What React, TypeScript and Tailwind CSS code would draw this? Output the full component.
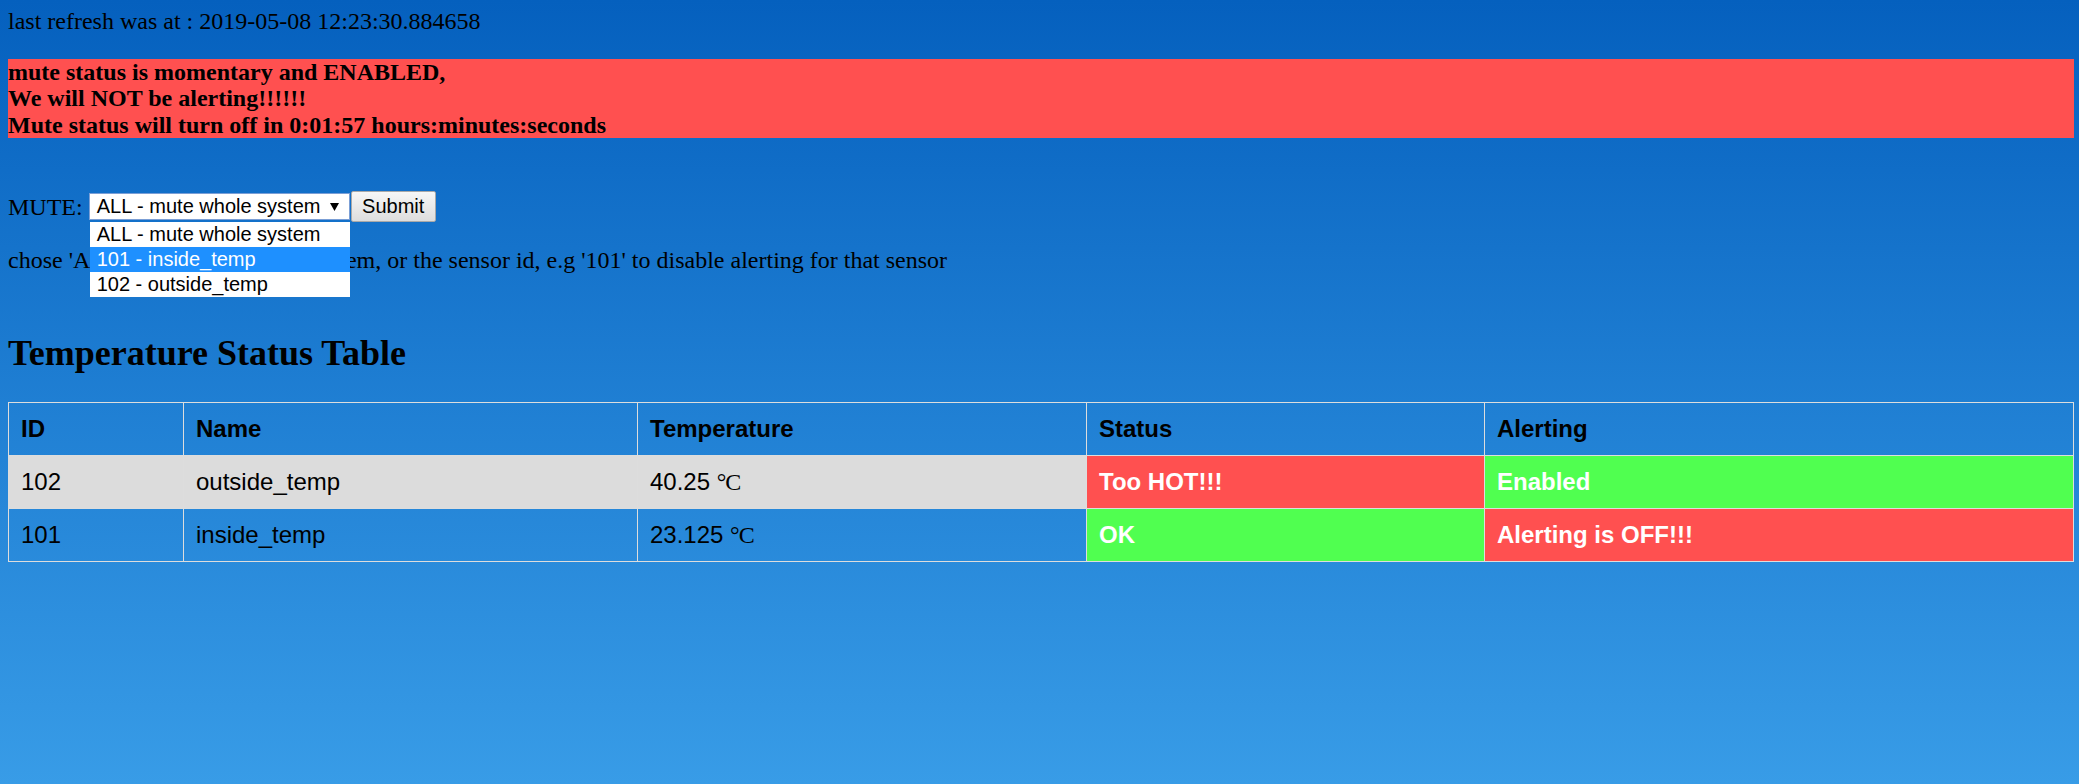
import React from 'react';

type Sensor = {
    id: string;
    name: string;
    temp: string;
    status: string;
    statusOk: boolean;
    alerting: string;
    alertingOn: boolean;
    shaded: boolean;
};

const sensors: Sensor[] = [
    { id: '102', name: 'outside_temp', temp: '40.25', status: 'Too HOT!!!', statusOk: false, alerting: 'Enabled', alertingOn: true, shaded: true },
    { id: '101', name: 'inside_temp', temp: '23.125', status: 'OK', statusOk: true, alerting: 'Alerting is OFF!!!', alertingOn: false, shaded: false },
];

const options = ['ALL - mute whole system', '101 - inside_temp', '102 - outside_temp'];

const cell = 'border border-[#dddddd] px-3 py-3 leading-[28px] text-left align-middle';

const MuteSelect = () => (
    <div className="relative ml-[6px] h-[27px]">
        <div className="flex h-[27px] w-[261px] items-center justify-between border border-[#7b9fd6] bg-white pl-[7px] pr-[10px] font-['Liberation_Sans',Arial,sans-serif] text-[20px] leading-[23px] text-black">
            <span>ALL - mute whole system</span>
            <svg width="9" height="8" viewBox="0 0 9 8" className="mt-[1px]">
                <polygon points="0,0 9,0 4.5,8" fill="#000" />
            </svg>
        </div>
        {/* open option list */}
        <div className="absolute left-[1px] top-[29px] z-10 w-[260px] bg-white font-['Liberation_Sans',Arial,sans-serif] text-[20px] leading-[25px] text-black">
            {options.map((opt, i) => (
                <div
                    key={opt}
                    className={i === 1 ? 'h-[25px] bg-[#1e90ff] pl-[7px] text-white' : 'h-[25px] pl-[7px]'}
                >
                    {opt}
                </div>
            ))}
        </div>
    </div>
);

export default function App() {
    return (
        <div className="min-h-screen bg-[linear-gradient(to_bottom,#0560be,#389ce7)] pl-2 pr-[5px] pt-2 font-['Liberation_Serif','Times_New_Roman',serif] text-[24px] leading-[26.6px] text-black">
            <div>last refresh was at : 2019-05-08 12:23:30.884658</div>

            <div className="mt-[24px] bg-[#ff5050] font-bold">
                <div>mute status is momentary and ENABLED,</div>
                <div>We will NOT be alerting!!!!!!</div>
                <div>Mute status will turn off in 0:01:57 hours:minutes:seconds</div>
            </div>

            <div className="mt-[53px] flex h-[31px] items-center">
                <span>MUTE:</span>
                <MuteSelect />
                <button className="ml-[1px] h-[31px] w-[85px] rounded-[2px] border border-[#a9a9a9] bg-[linear-gradient(to_bottom,#f7f7f7,#dddddd)] font-['Liberation_Sans',Arial,sans-serif] text-[20px] leading-[23px] text-black">
                    Submit
                </button>
            </div>

            <div className="mt-[25px]">
                chose 'ALL' to mute the whole system, or the sensor id, e.g '101' to disable alerting for that sensor
            </div>

            <h2 className="mt-[59px] text-[36px] font-bold leading-[40px]">Temperature Status Table</h2>

            <table className="mt-[29px] w-full table-fixed border-collapse font-['Liberation_Sans',Arial,sans-serif] text-[24px]">
                <colgroup>
                    <col className="w-[175px]" />
                    <col className="w-[454px]" />
                    <col className="w-[449px]" />
                    <col className="w-[398px]" />
                    <col />
                </colgroup>
                <thead>
                    <tr className="font-bold">
                        <th className={cell}>ID</th>
                        <th className={cell}>Name</th>
                        <th className={cell}>Temperature</th>
                        <th className={cell}>Status</th>
                        <th className={cell}>Alerting</th>
                    </tr>
                </thead>
                <tbody>
                    {sensors.map((s) => (
                        <tr key={s.id} className={s.shaded ? 'bg-[#dcdcdc]' : ''}>
                            <td className={cell}>{s.id}</td>
                            <td className={cell}>{s.name}</td>
                            <td className={cell}>
                                {s.temp} <span className="font-['Liberation_Serif',serif] tracking-[-1px]">°C</span>
                            </td>
                            <td className={`${cell} font-bold text-white ${s.statusOk ? 'bg-[#50ff50]' : 'bg-[#ff5050]'}`}>
                                {s.status}
                            </td>
                            <td className={`${cell} font-bold text-white ${s.alertingOn ? 'bg-[#50ff50]' : 'bg-[#ff5050]'}`}>
                                {s.alerting}
                            </td>
                        </tr>
                    ))}
                </tbody>
            </table>
        </div>
    );
}
